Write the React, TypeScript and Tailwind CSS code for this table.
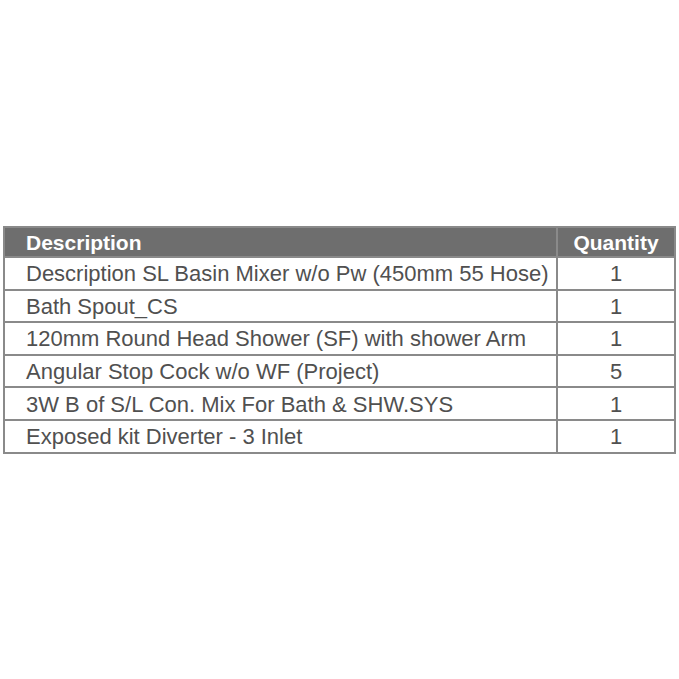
import React from "react";

const rows: [string, string][] = [
  ["Description SL Basin Mixer w/o Pw (450mm 55 Hose)", "1"],
  ["Bath Spout_CS", "1"],
  ["120mm Round Head Shower (SF) with shower Arm", "1"],
  ["Angular Stop Cock w/o WF (Project)", "5"],
  ["3W B of S/L Con. Mix For Bath & SHW.SYS", "1"],
  ["Exposed kit Diverter - 3 Inlet", "1"],
];

export default function App() {
  return (
    <div
      className="w-[679px] h-[679px] bg-white pt-[226px] pl-[3px]"
      style={{ fontFamily: '"Liberation Sans", Arial, sans-serif' }}
    >
      <table className="w-[671px] border-collapse table-fixed">
        <colgroup>
          <col className="w-[553px]" />
          <col className="w-[118px]" />
        </colgroup>
        <thead>
          <tr className="h-[30px] bg-[#6e6e6e] text-white">
            <th className="border-2 border-[#8a8a8a] text-left font-bold text-[21px] leading-none pl-[21px] p-0">
              Description
            </th>
            <th className="border-2 border-[#8a8a8a] text-center font-bold text-[21px] leading-none p-0">
              Quantity
            </th>
          </tr>
        </thead>
        <tbody>
          {rows.map(([d, q], i) => (
            <tr key={i} className="h-[32.6px] text-[#505050]">
              <td className="border-2 border-[#8a8a8a] text-left text-[22px] leading-none pl-[21px] pt-[2px] pr-0 pb-0 whitespace-nowrap">
                {d}
              </td>
              <td className="border-2 border-[#8a8a8a] text-center text-[22px] leading-none pt-[2px] px-0 pb-0">
                {q}
              </td>
            </tr>
          ))}
        </tbody>
      </table>
    </div>
  );
}
